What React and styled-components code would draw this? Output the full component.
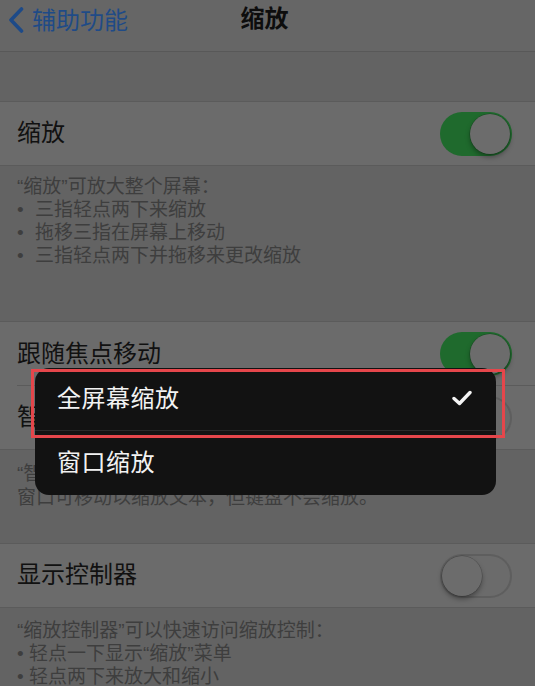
import React from 'react';
import styled, { createGlobalStyle } from 'styled-components';

const FONT = `"Liberation Sans", "Noto Sans CJK SC", sans-serif`;

const GlobalStyle = createGlobalStyle`
  html, body {
    margin: 0;
    padding: 0;
    background: #636363;
  }
  * {
    box-sizing: border-box;
  }
`;

const Page = styled.div`
  position: relative;
  width: 535px;
  height: 686px;
  overflow: hidden;
  background: #636363;
  font-family: ${FONT};
`;

const NavBar = styled.div`
  position: relative;
  display: flex;
  align-items: flex-start;
  justify-content: center;
  height: 52px;
  padding-top: 4px;
  background: #666666;
  border-bottom: 1px solid #585858;
`;

const BackButton = styled.div`
  position: absolute;
  left: 8px;
  top: 7px;
  display: flex;
  align-items: center;
  gap: 8px;
  color: #1f4b87;
  font-size: 24px;
  line-height: 25px;
`;

const NavTitle = styled.div`
  font-size: 24px;
  line-height: 30px;
  font-weight: 700;
  color: #0d0d0d;
  margin-left: -6px;
`;

const Gap = styled.div`
  height: ${(p) => p.h}px;
`;

const Section = styled.div`
  background: #6b6b6b;
  border-top: 1px solid #5b5b5b;
  border-bottom: 1px solid #5b5b5b;
`;

const Row = styled.div`
  position: relative;
  display: flex;
  align-items: center;
  justify-content: space-between;
  height: ${(p) => (p.last ? 63 : 64)}px;
  padding: 0 23px 0 17px;

  &::after {
    content: '';
    display: ${(p) => (p.last ? 'none' : 'block')};
    position: absolute;
    left: 17px;
    right: 0;
    bottom: 0;
    height: 1px;
    background: #5b5b5b;
  }
`;

const RowLabel = styled.span`
  font-size: 24px;
  line-height: 30px;
  padding-bottom: 1px;
  color: #111111;
`;

const Track = styled.div`
  position: relative;
  width: 72px;
  height: 44px;
  border-radius: 22px;
  background: ${(p) => (p.on ? '#1f6a2d' : '#6b6b6b')};
  box-shadow: ${(p) => (p.on ? 'none' : 'inset 0 0 0 2px #5e5e5e')};
`;

const Knob = styled.div`
  position: absolute;
  top: 2px;
  left: ${(p) => (p.on ? 30 : 2)}px;
  width: 40px;
  height: 40px;
  border-radius: 50%;
  background: #6c6c6c;
  box-shadow: 0 3px 5px rgba(0, 0, 0, 0.35), 0 0 0 0.5px rgba(0, 0, 0, 0.25);
`;

const Toggle = ({ on }) => (
  <Track on={on ? 1 : 0}>
    <Knob on={on ? 1 : 0} />
  </Track>
);

const Footer = styled.div`
  padding: ${(p) => p.pt}px 17px ${(p) => p.pb}px;
  font-size: 19px;
  line-height: ${(p) => p.lh}px;
  color: #3e3e3e;
  white-space: nowrap;
`;

const FooterLine = styled.div``;

const Bullet = styled.div`
  display: flex;
`;

const Marker = styled.span`
  width: ${(p) => p.w}px;
  flex: none;
`;

const Menu = styled.div`
  position: absolute;
  left: 35px;
  top: 368px;
  width: 461px;
  background: #121212;
  border-radius: 14px;
  z-index: 2;
`;

const MenuItem = styled.div`
  display: flex;
  align-items: center;
  justify-content: space-between;
  height: ${(p) => (p.last ? 64 : 63)}px;
  padding: 0 24px 0 22px;
  border-bottom: ${(p) => (p.last ? 'none' : '1px solid #2a2a2a')};
`;

const MenuLabel = styled.span`
  font-size: 24px;
  line-height: 30px;
  padding-bottom: ${(p) => p.lift}px;
  letter-spacing: 0.5px;
  color: #f2f2f2;
`;

const Highlight = styled.div`
  position: absolute;
  left: -4px;
  top: 1px;
  width: 474px;
  height: 69px;
  border: 3px solid #e5464b;
  pointer-events: none;
`;

const Check = () => (
  <svg width="20" height="16" viewBox="0 0 20 16" style={{ marginBottom: 2 }}>
    <polyline
      points="2,8.5 7.5,13.5 18,2.5"
      fill="none"
      stroke="#f5f5f5"
      strokeWidth="3.4"
      strokeLinecap="round"
      strokeLinejoin="round"
    />
  </svg>
);

const Chevron = () => (
  <svg width="16" height="26" viewBox="0 0 16 26">
    <path
      d="M13.5 2 L3 13 L13.5 24"
      fill="none"
      stroke="#1d4a88"
      strokeWidth="3.6"
      strokeLinecap="round"
      strokeLinejoin="round"
    />
  </svg>
);

const zoomTips = ['三指轻点两下来缩放', '拖移三指在屏幕上移动', '三指轻点两下并拖移来更改缩放'];
const controllerTips = ['轻点一下显示“缩放”菜单', '轻点两下来放大和缩小'];

export default function App() {
  return (
    <>
      <GlobalStyle />
      <Page>
        <NavBar>
          <BackButton>
            <Chevron />
            <span>辅助功能</span>
          </BackButton>
          <NavTitle>缩放</NavTitle>
        </NavBar>

        <Gap h={49} />
        <Section>
          <Row last>
            <RowLabel>缩放</RowLabel>
            <Toggle on />
          </Row>
        </Section>
        <Footer pt={9} lh={23} pb={54}>
          <FooterLine>“缩放”可放大整个屏幕：</FooterLine>
          {zoomTips.map((t) => (
            <Bullet key={t}>
              <Marker w={18}>•</Marker>
              <span>{t}</span>
            </Bullet>
          ))}
        </Footer>

        <Section>
          <Row>
            <RowLabel>跟随焦点移动</RowLabel>
            <Toggle on />
          </Row>
          <Row last>
            <RowLabel>智能键入</RowLabel>
            <Toggle />
          </Row>
        </Section>
        <Footer pt={12} lh={24} pb={33}>
          <FooterLine>“智能键入”会在键盘出现时切换到“窗口缩放”。</FooterLine>
          <FooterLine>窗口可移动以缩放文本，但键盘不会缩放。</FooterLine>
        </Footer>

        <Section>
          <Row last>
            <RowLabel>显示控制器</RowLabel>
            <Toggle />
          </Row>
        </Section>
        <Footer pt={11} lh={23} pb={0}>
          <FooterLine>“缩放控制器”可以快速访问缩放控制：</FooterLine>
          {controllerTips.map((t) => (
            <Bullet key={t}>
              <Marker w={12}>•</Marker>
              <span>{t}</span>
            </Bullet>
          ))}
        </Footer>

        <Menu>
          <MenuItem>
            <MenuLabel lift={1}>全屏幕缩放</MenuLabel>
            <Check />
          </MenuItem>
          <MenuItem last>
            <MenuLabel lift={0}>窗口缩放</MenuLabel>
          </MenuItem>
          <Highlight />
        </Menu>
      </Page>
    </>
  );
}
